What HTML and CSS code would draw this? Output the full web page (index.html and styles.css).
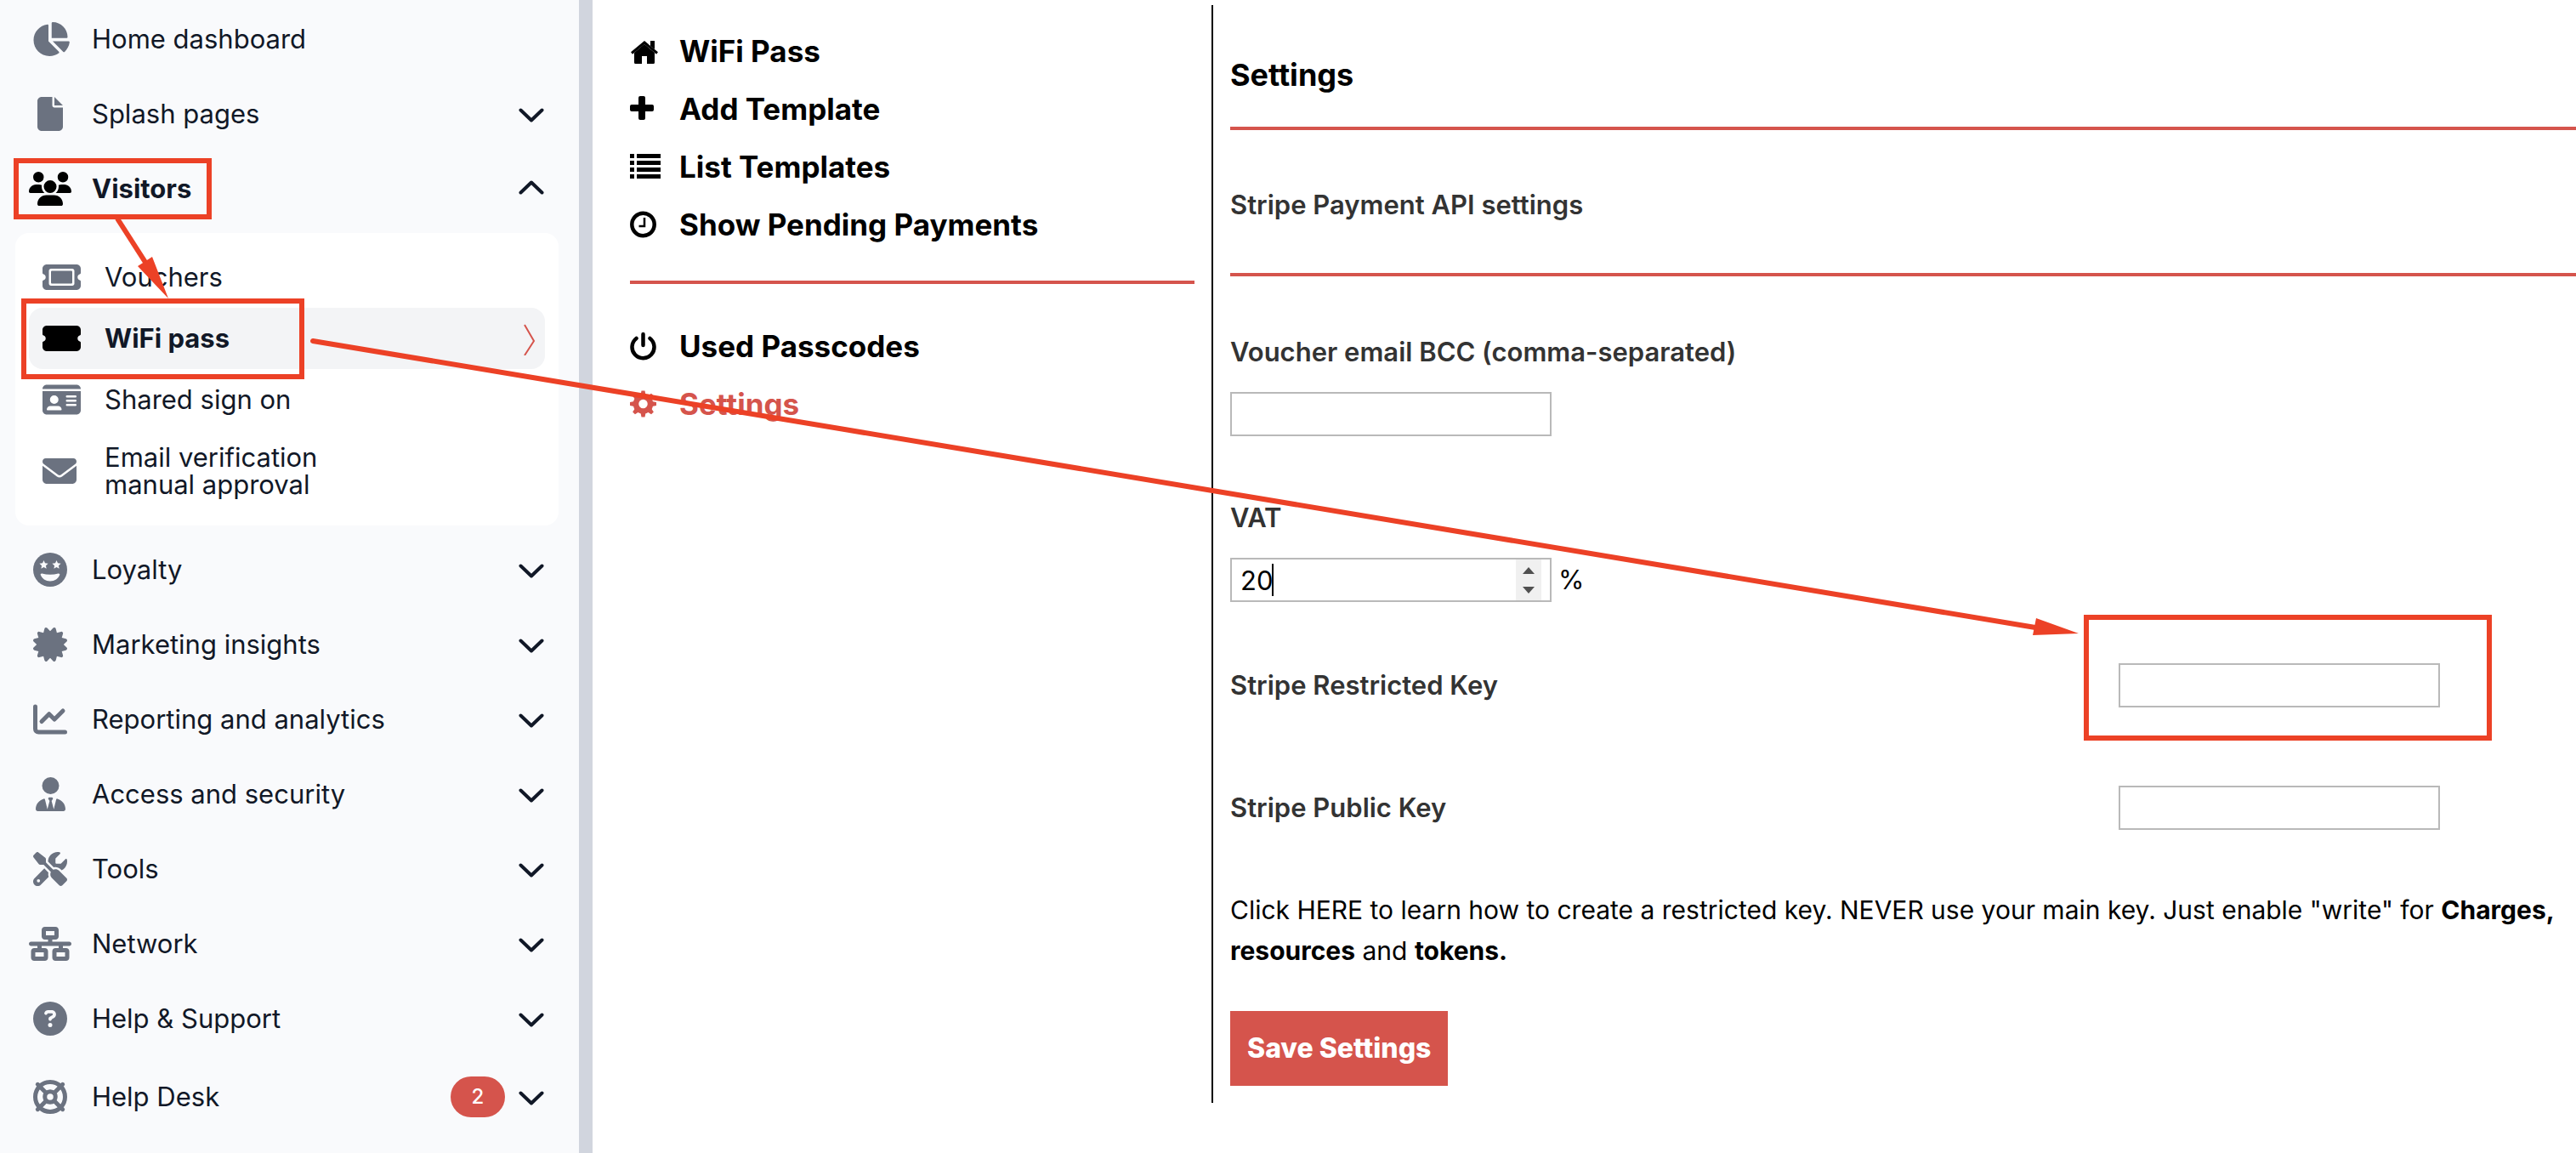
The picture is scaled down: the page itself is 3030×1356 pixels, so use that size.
FILE: index.html
```html
<!DOCTYPE html>
<html lang="en">
<head>
<meta charset="utf-8">
<title>WiFi Pass settings</title>
<link rel="stylesheet" href="styles.css">
</head>
<body>
<svg class="defs" aria-hidden="true">
  <symbol id="chevron" viewBox="0 0 32 20"><path d="M3.500 5.500L16 17.500 28.500 5.500" fill="none" stroke="currentColor" stroke-width="4" stroke-linecap="round" stroke-linejoin="round"/></symbol>
</svg>
<div class="app">
  <nav class="sidebar" aria-label="Main">
    <a class="nav-row" href="#"><span class="nav-icon"><svg width="45" height="40" viewBox="0 0 576 512"><path d="M304 240V16.600c0-9 7-16.600 16-16.600C443.700 0 544 100.300 544 224c0 9-7.600 16-16.600 16H304zM32 272C32 150.700 122.100 50.300 239 34.300c9.200-1.300 17 6.100 17 15.400V288L412.500 444.500c6.700 6.700 6.200 17.700-1.500 23.100C371.800 495.600 323.800 512 272 512C139.500 512 32 404.600 32 272zm526.400 16c9.300 0 16.600 7.800 15.400 17c-7.700 55.900-34.600 105.600-73.900 142.300c-6 5.600-15.400 5.200-21.200-.7L320 288H558.400z"/></svg></span><span class="nav-text">Home dashboard</span></a>
    <a class="nav-row" href="#"><span class="nav-icon"><svg width="30" height="40" viewBox="0 0 384 512"><path d="M0 64C0 28.700 28.700 0 64 0H224V128c0 17.700 14.300 32 32 32H384V448c0 35.300-28.700 64-64 64H64c-35.300 0-64-28.700-64-64V64zm384 64H256V0L384 128z"/></svg></span><span class="nav-text">Splash pages</span><svg class="chevron"><use href="#chevron"/></svg></a>
    <a class="nav-row nav-row--open" href="#"><span class="nav-icon"><svg width="50" height="40" viewBox="0 0 640 512"><path d="M144 0a80 80 0 1 1 0 160A80 80 0 1 1 144 0zM512 0a80 80 0 1 1 0 160A80 80 0 1 1 512 0zM0 298.700C0 239.800 47.800 192 106.700 192h42.700c15.900 0 31 3.500 44.600 9.700c-1.300 7.200-1.900 14.700-1.900 22.300c0 38.200 16.800 72.500 43.300 96c-.2 0-.4 0-.7 0H21.300C9.600 320 0 310.400 0 298.700zM405.300 320c-.2 0-.4 0-.7 0c26.600-23.500 43.300-57.800 43.300-96c0-7.600-.7-15-1.900-22.300c13.600-6.300 28.700-9.700 44.600-9.700h42.700C592.200 192 640 239.800 640 298.700c0 11.800-9.600 21.300-21.300 21.300H405.300zM224 224a96 96 0 1 1 192 0 96 96 0 1 1 -192 0zM128 485.300C128 411.700 187.700 352 261.300 352H378.700C452.300 352 512 411.700 512 485.300c0 14.700-11.900 26.700-26.700 26.700H154.700c-14.700 0-26.700-11.900-26.700-26.700z"/></svg></span><span class="nav-text">Visitors</span><svg class="chevron chevron--up"><use href="#chevron"/></svg></a>
    <div class="sub-panel">
      <a class="sub-row" href="#"><span class="sub-icon"><svg width="45" height="40" viewBox="0 0 576 512"><path fill-rule="evenodd" d="M64 64C28.700 64 0 92.700 0 128v64c0 8.800 7.400 15.700 15.700 18.600C34.500 217.100 48 235 48 256s-13.500 38.900-32.300 45.400C7.400 304.300 0 311.200 0 320v64c0 35.300 28.700 64 64 64H512c35.300 0 64-28.700 64-64V320c0-8.800-7.400-15.700-15.700-18.600C541.500 294.900 528 277 528 256s13.500-38.900 32.300-45.400c8.300-2.900 15.700-9.800 15.700-18.600V128c0-35.300-28.700-64-64-64H64zM96 160c0-17.700 14.300-32 32-32H448c17.700 0 32 14.300 32 32V352c0 17.700-14.300 32-32 32H128c-17.700 0-32-14.300-32-32V160zM128 176v160c0 8.800 7.200 16 16 16H432c8.800 0 16-7.200 16-16V176c0-8.800-7.200-16-16-16H144c-8.800 0-16 7.200-16 16z"/></svg></span><span>Vouchers</span></a>
      <a class="sub-row sub-row--active" href="#"><span class="sub-icon"><svg width="45" height="40" viewBox="0 0 576 512"><path d="M64 64C28.700 64 0 92.700 0 128v64c0 8.800 7.400 15.700 15.700 18.600C34.500 217.100 48 235 48 256s-13.500 38.900-32.300 45.400C7.400 304.300 0 311.200 0 320v64c0 35.300 28.700 64 64 64H512c35.300 0 64-28.700 64-64V320c0-8.800-7.400-15.700-15.700-18.600C541.500 294.900 528 277 528 256s13.500-38.900 32.300-45.400c8.300-2.900 15.700-9.800 15.700-18.600V128c0-35.300-28.700-64-64-64H64z"/></svg></span><span>WiFi pass</span><svg class="arrow" width="16" height="40" viewBox="0 0 16 40"><path d="M2 4L13 23 2 40" fill="none" stroke="currentColor" stroke-width="2"/></svg></a>
      <a class="sub-row" href="#"><span class="sub-icon"><svg width="45" height="40" viewBox="0 0 576 512"><path fill-rule="evenodd" d="M0 96l576 0c0-35.300-28.700-64-64-64H64C28.700 32 0 60.700 0 96zm0 32V416c0 35.300 28.700 64 64 64H512c35.300 0 64-28.700 64-64V128H0zM64 405.300c0-29.500 23.900-53.300 53.300-53.300H234.700c29.500 0 53.300 23.900 53.300 53.300c0 5.900-4.800 10.700-10.700 10.700H74.700c-5.900 0-10.700-4.800-10.700-10.700zM176 192a64 64 0 1 1 0 128 64 64 0 1 1 0-128zM368 192H496a16 16 0 0 1 0 32H368a16 16 0 0 1 0-32zM368 256H496a16 16 0 0 1 0 32H368a16 16 0 0 1 0-32zM368 320H496a16 16 0 0 1 0 32H368a16 16 0 0 1 0-32z"/></svg></span><span>Shared sign on</span></a>
      <a class="sub-row sub-row--tall" href="#"><span class="sub-icon"><svg width="40" height="40" viewBox="0 0 512 512"><path d="M48 64C21.500 64 0 85.500 0 112c0 15.100 7.100 29.300 19.200 38.400L236.800 313.600c11.400 8.500 27 8.500 38.400 0L492.800 150.400c12.100-9.100 19.200-23.300 19.200-38.400c0-26.500-21.500-48-48-48H48zM0 176V384c0 35.300 28.700 64 64 64H448c35.300 0 64-28.700 64-64V176L294.400 339.200c-22.800 17.100-54 17.100-76.800 0L0 176z"/></svg></span><span>Email verification<br>manual approval</span></a>
    </div>
    <a class="nav-row" href="#"><span class="nav-icon"><svg width="40" height="40" viewBox="0 0 512 512"><circle cx="256" cy="256" r="256"/><g fill="#f9fafc"><path id="star" d="M160 116l19 42 46 6-34 31 9 46-40-23-40 23 9-46-34-31 46-6z"/><use href="#star" x="192"/><path d="M112 334c-5-14 8-25 22-21 76 20 168 20 244 0 14-4 27 7 22 21-20 56-77 96-144 96s-124-40-144-96z"/></g></svg></span><span class="nav-text">Loyalty</span><svg class="chevron"><use href="#chevron"/></svg></a>
    <a class="nav-row" href="#"><span class="nav-icon"><svg width="40" height="40" viewBox="0 0 512 512"><path d="M211 7.300C205 1 196-1.400 187.600 .8s-14.900 8.900-17.100 17.300L154.700 80.600l-62-17.500c-8.400-2.400-17.400 0-23.500 6.100s-8.500 15.100-6.100 23.500l17.500 62L18.100 170.600c-8.400 2.100-15 8.700-17.300 17.100S1 205 7.300 211l46.200 45L7.300 301C1 307-1.400 316 .8 324.400s8.900 14.900 17.300 17.100l62.500 15.800-17.500 62c-2.400 8.400 0 17.400 6.100 23.500s15.100 8.500 23.500 6.100l62-17.500 15.800 62.500c2.100 8.400 8.700 15 17.100 17.300s17.300-.2 23.400-6.400l45-46.200 45 46.200c6.100 6.200 15 8.700 23.400 6.400s14.900-8.900 17.100-17.300l15.800-62.500 62 17.500c8.400 2.400 17.400 0 23.500-6.100s8.500-15.100 6.100-23.500l-17.500-62 62.500-15.800c8.400-2.100 15-8.700 17.300-17.100s-.2-17.400-6.400-23.400l-46.200-45 46.200-45c6.200-6.100 8.700-15 6.400-23.400s-8.900-14.900-17.300-17.100l-62.500-15.800 17.500-62c2.400-8.400 0-17.400-6.100-23.500s-15.100-8.500-23.500-6.100l-62 17.500L341.400 18.100c-2.100-8.400-8.700-15-17.100-17.300S307 1 301 7.300L256 53.500 211 7.300z"/></svg></span><span class="nav-text">Marketing insights</span><svg class="chevron"><use href="#chevron"/></svg></a>
    <a class="nav-row" href="#"><span class="nav-icon"><svg width="40" height="40" viewBox="0 0 512 512"><path d="M32 64v336c0 26.500 21.500 48 48 48h400M128 288l112-112 80 80 128-128" fill="none" stroke="currentColor" stroke-width="64" stroke-linecap="round" stroke-linejoin="round"/></svg></span><span class="nav-text">Reporting and analytics</span><svg class="chevron"><use href="#chevron"/></svg></a>
    <a class="nav-row" href="#"><span class="nav-icon"><svg width="35" height="40" viewBox="0 0 448 512"><path d="M96 128a128 128 0 1 0 256 0A128 128 0 1 0 96 128zm94.500 200.200l18.600 31L175.800 483.100l-36-146.900c-2-8.100-9.800-13.400-17.900-11.300C51.900 342.400 0 405.800 0 481.300c0 17 13.800 30.700 30.700 30.700H417.300c17 0 30.700-13.800 30.700-30.700c0-75.500-51.900-138.900-121.900-156.400c-8.100-2-15.900 3.300-17.900 11.300l-36 146.900L238.900 359.200l18.600-31c6.400-10.700-1.300-24.200-13.700-24.200H204.300c-12.400 0-20.100 13.600-13.700 24.200z"/></svg></span><span class="nav-text">Access and security</span><svg class="chevron"><use href="#chevron"/></svg></a>
    <a class="nav-row" href="#"><span class="nav-icon"><svg width="40" height="40" viewBox="0 0 512 512"><path fill-rule="evenodd" d="M78.600 5C69.100-2.400 55.600-1.500 47 7L7 47c-8.500 8.500-9.400 22-2.100 31.600l80 104c4.500 5.900 11.600 9.400 19 9.400h54.100l109 109c-14.700 29-10 65.400 14.300 89.600l112 112c12.500 12.500 32.800 12.500 45.300 0l64-64c12.500-12.500 12.500-32.800 0-45.300l-112-112c-24.200-24.200-60.600-29-89.600-14.300l-109-109V104c0-7.500-3.500-14.500-9.400-19L78.600 5zM19.900 396.100C7.200 408.800 0 426.100 0 444.100C0 481.600 30.400 512 67.900 512c18 0 35.300-7.200 48-19.900L233.700 374.300c-7.800-20.900-9-43.600-3.600-65.100l-61.700-61.700L19.900 396.100zM512 144c0-10.500-1.100-20.700-3.200-30.500c-2.400-11.200-16.100-14.100-24.200-6l-63.900 63.900c-3 3-7.100 4.700-11.300 4.700H352c-8.800 0-16-7.200-16-16V102.600c0-4.200 1.700-8.300 4.700-11.300l63.900-63.900c8.100-8.100 5.200-21.800-6-24.200C388.700 1.100 378.500 0 368 0C288.500 0 224 64.500 224 144l0 .8 85.300 85.300c36-9.100 75.800 .5 104 28.700L429 274.500c49-23 83-72.800 83-130.500zM56 432a24 24 0 1 1 48 0 24 24 0 1 1 -48 0z"/></svg></span><span class="nav-text">Tools</span><svg class="chevron"><use href="#chevron"/></svg></a>
    <a class="nav-row" href="#"><span class="nav-icon"><svg width="50" height="40" viewBox="0 0 640 512"><path fill-rule="evenodd" d="M256 64H384v64H256V64zM240 0c-26.500 0-48 21.500-48 48v96c0 26.500 21.500 48 48 48h48v32H32c-17.700 0-32 14.300-32 32s14.300 32 32 32h96v32H80c-26.500 0-48 21.500-48 48v96c0 26.500 21.500 48 48 48H240c26.500 0 48-21.500 48-48V368c0-26.500-21.500-48-48-48H192V288H448v32H400c-26.500 0-48 21.500-48 48v96c0 26.500 21.500 48 48 48H560c26.500 0 48-21.500 48-48V368c0-26.500-21.500-48-48-48H512V288h96c17.700 0 32-14.300 32-32s-14.300-32-32-32H352V192h48c26.500 0 48-21.500 48-48V48c0-26.500-21.500-48-48-48H240zM96 448V384H224v64H96zm320-64H544v64H416V384z"/></svg></span><span class="nav-text">Network</span><svg class="chevron"><use href="#chevron"/></svg></a>
    <a class="nav-row" href="#"><span class="nav-icon"><svg width="40" height="40" viewBox="0 0 512 512"><path fill-rule="evenodd" d="M256 512A256 256 0 1 0 256 0a256 256 0 1 0 0 512zM169.800 165.300c7.900-22.300 29.100-37.300 52.800-37.300h58.300c34.900 0 63.100 28.300 63.100 63.100c0 22.600-12.100 43.500-31.700 54.800L280 264.400c-.2 13-10.900 23.600-24 23.600c-13.300 0-24-10.700-24-24V250.500c0-8.600 4.600-16.500 12.100-20.800l44.300-25.400c4.700-2.700 7.600-7.700 7.600-13.100c0-8.400-6.800-15.100-15.100-15.100H222.600c-3.400 0-6.400 2.100-7.500 5.300l-.4 1.200c-4.400 12.500-18.200 19-30.600 14.600s-19-18.200-14.600-30.600l.4-1.200zM224 352a32 32 0 1 1 64 0 32 32 0 1 1 -64 0z"/></svg></span><span class="nav-text">Help &amp; Support</span><svg class="chevron"><use href="#chevron"/></svg></a>
    <a class="nav-row" href="#"><span class="nav-icon"><svg width="40" height="40" viewBox="0 0 512 512"><g fill="none" stroke="currentColor" stroke-width="64" stroke-linecap="round"><circle cx="256" cy="256" r="224"/><circle cx="256" cy="256" r="80"/><path d="M68 68l126 126M444 68L318 194M68 444l126-126M444 444L318 318"/></g></svg></span><span class="nav-text">Help Desk</span><span class="badge">2</span><svg class="chevron"><use href="#chevron"/></svg></a>
  </nav>

  <div class="workspace">
    <nav class="menu" aria-label="WiFi Pass">
      <a class="menu-row" href="#"><span class="menu-icon"><svg width="34" height="36" viewBox="0 0 34 36"><path d="M5 20L17 9.500 29 20v11.500a1.500 1.500 0 0 1-1.500 1.500H20v-9h-6v9H6.500A1.500 1.500 0 0 1 5 31.500z"/><path d="M2 18.500L17 6l15 12.500" fill="none" stroke="#fff" stroke-width="6"/><path d="M24 6h5v10l-5-4z"/><path d="M2 20.500L17 8l15 12.500" fill="none" stroke="currentColor" stroke-width="3"/></svg></span>WiFi Pass</a>
      <a class="menu-row" href="#"><span class="menu-icon"><svg width="28" height="36" viewBox="0 0 28 36"><path d="M12 3h4a2 2 0 0 1 2 2v8h8a2 2 0 0 1 2 2v4a2 2 0 0 1-2 2h-8v8a2 2 0 0 1-2 2h-4a2 2 0 0 1-2-2v-8H2a2 2 0 0 1-2-2v-4a2 2 0 0 1 2-2h8V5a2 2 0 0 1 2-2z"/></svg></span>Add Template</a>
      <a class="menu-row" href="#"><span class="menu-icon"><svg width="36" height="36" viewBox="0 0 36 36"><path d="M0 3h5v5H0zM8 3h28v5H8zM0 11h5v5H0zM8 11h28v5H8zM0 19h5v5H0zM8 19h28v5H8zM0 27h5v5H0zM8 27h28v5H8z"/></svg></span>List Templates</a>
      <a class="menu-row" href="#"><span class="menu-icon"><svg width="31" height="36" viewBox="0 0 31 36"><g fill="none" stroke="currentColor"><circle cx="15.500" cy="18" r="13.200" stroke-width="4.500"/><path d="M17 10v10h-6.500" stroke-width="2.500"/></g></svg></span>Show Pending Payments</a>
      <hr class="rule menu-rule">
      <a class="menu-row" href="#"><span class="menu-icon"><svg width="31" height="36" viewBox="0 0 31 36"><g fill="none" stroke="currentColor" stroke-width="4.500" stroke-linecap="round"><path d="M7.500 9a13 13 0 1 0 16 0M15.500 4v13"/></g></svg></span>Used Passcodes</a>
      <a class="menu-row menu-row--active" href="#"><span class="menu-icon"><svg width="31" height="36" viewBox="0 0 31 36"><circle cx="15.500" cy="18" r="8.500" fill="none" stroke="currentColor" stroke-width="6.500"/><g id="teeth"><path id="tooth" d="M12.500 7.500l1-5h4l1 5zM12.500 28.500l1 5h4l1-5z"/><use href="#tooth" transform="rotate(90 15.500 18)"/></g><use href="#teeth" transform="rotate(45 15.500 18)"/></svg></span>Settings</a>
    </nav>

    <main class="content">
      <h1 class="title">Settings</h1>
      <hr class="rule">
      <h2 class="subtitle">Stripe Payment API settings</h2>
      <hr class="rule">
      <form class="form">
        <div class="field">
          <label class="label" for="bcc">Voucher email BCC (comma-separated)</label>
          <input class="input" id="bcc" type="text">
        </div>
        <div class="field">
          <label class="label" for="vat">VAT</label>
          <div class="with-unit">
            <span class="vat-box"><input class="input" id="vat" type="number" value="20"><span class="caret"></span></span>
            <span>%</span>
          </div>
        </div>
        <div class="keys">
          <div class="key-row">
            <label class="label" for="restricted">Stripe Restricted Key</label>
            <input class="input" id="restricted" type="text">
          </div>
          <div class="key-row">
            <label class="label" for="public">Stripe Public Key</label>
            <input class="input" id="public" type="text">
          </div>
        </div>
        <p class="note">Click HERE to learn how to create a restricted key. NEVER use your main key. Just enable "write" for <strong>Charges,<br>resources</strong> and <strong>tokens.</strong></p>
        <button class="save" type="button">Save Settings</button>
      </form>
    </main>
  </div>
</div>

<svg class="markup" width="3030" height="1356" viewBox="0 0 3030 1356" aria-hidden="true">
  <g fill="none" stroke="#ec4126" stroke-width="6">
    <rect x="19" y="189" width="227" height="66"/>
    <rect x="28" y="354" width="327" height="89"/>
    <rect x="2454" y="726" width="474" height="142"/>
    <path d="M138 257L172 310"/>
    <path d="M368 401L2394 738" stroke-linecap="round"/>
  </g>
  <path d="M179 302L162 313 198 351zM2395 727L2391 747 2445 745z" fill="#ec4126"/>
</svg>
</body>
</html>
```
FILE: styles.css
```css
* { box-sizing: border-box; }

body {
  margin: 0;
  background: #fff;
  color: #000;
  font: 400 31px/48px Inter, "Liberation Sans", sans-serif;
  overflow-x: hidden;
}

a { color: inherit; text-decoration: none; }
svg { display: block; fill: currentColor; }
.defs { position: absolute; width: 0; height: 0; }

.app { display: flex; min-height: 100vh; }

/* Main navigation */
.sidebar {
  flex: 0 0 697px;
  padding: 2px 24px 18px 18px;
  background: #f9fafc;
  border-right: 16px solid #d1d5de;
  color: #111827;
}
.nav-row {
  display: flex;
  align-items: center;
  min-height: 88px;
  padding: 24px 16px;
  line-height: 40px;
}
.nav-row--open { font-weight: 700; }
.nav-icon {
  display: flex;
  justify-content: center;
  width: 50px;
  margin-right: 24px;
  color: #6b7280;
}
.nav-row--open .nav-icon { color: #000; }
.nav-text { flex: 1; }
.chevron { width: 32px; height: 20px; }
.chevron--up { transform: rotate(180deg); }
.badge {
  width: 64px;
  margin-right: 15px;
  border-radius: 24px;
  background: #d5544c;
  color: #fff;
  font-size: 24px;
  font-weight: 500;
  line-height: 48px;
  text-align: center;
}

.sub-panel {
  margin: 8px 0;
  padding: 16px;
  border-radius: 16px;
  background: #fff;
}
.sub-row {
  display: flex;
  align-items: center;
  min-height: 72px;
  padding: 0 10px 0 16px;
  border-radius: 16px;
  line-height: 32px;
}
.sub-row--tall { min-height: 96px; }
.sub-row--active { background: #f3f4f6; font-weight: 700; }
.sub-icon { width: 45px; margin-right: 28px; color: #6b7280; }
.sub-row--active .sub-icon { color: #000; }
.arrow { margin-left: auto; color: #d5544c; }

/* WiFi Pass section */
.workspace {
  display: flex;
  flex: 1;
  align-self: flex-start;
  min-width: 0;
  padding-top: 6px;
}
.menu {
  flex: 0 0 730px;
  padding: 20px 20px 0 44px;
  border-right: 2px solid #000;
}
.menu-row {
  display: flex;
  align-items: center;
  height: 68px;
  font-size: 35px;
  font-weight: 700;
}
.menu-row--active { color: #d5544c; }
.menu-icon { width: 36px; margin-right: 22px; }
.rule { height: 4px; margin: 0; border: 0; background: #d5544c; }
.menu-rule { margin: 32px 0 39px; }

.content { flex: 1; min-width: 0; padding: 58px 0 20px 20px; }
.title { margin: 0 0 37px; font-size: 36px; font-weight: 700; line-height: 48px; }
.subtitle, .label { color: #333; font-size: 31px; font-weight: 600; line-height: 48px; }
.subtitle { margin: 64px 0 56px; }

.form { padding-top: 65px; }
.field { margin-bottom: 72px; }
.label { display: block; }
.input {
  display: block;
  width: 378px;
  height: 52px;
  padding: 0 10px;
  border: 2px solid #b9b9b9;
  background: #fff;
  color: #000;
  font: inherit;
}
.field .label { margin-bottom: 23px; }
.with-unit { display: flex; align-items: center; gap: 8px; }
.vat-box { position: relative; }
.caret { position: absolute; left: 49px; top: 7px; width: 2px; height: 38px; background: #000; }
.input::-webkit-inner-spin-button {
  appearance: none;
  width: 30px;
  height: 48px;
  opacity: 1;
  background: #f0f0f0 url("data:image/svg+xml,%3Csvg xmlns='http://www.w3.org/2000/svg' width='30' height='48'%3E%3Cpath d='M8 17l7-8 7 8zM8 32l7 8 7-8z' fill='%23505050'/%3E%3C/svg%3E") center no-repeat;
}
.keys { display: grid; gap: 92px; }
.key-row {
  display: grid;
  grid-template-columns: 66fr 34fr;
  align-items: center;
}
.note { margin: 70px 0 47px; font-size: 30px; white-space: nowrap; }
.note strong { font-weight: 700; }
.save {
  height: 88px;
  padding: 0 20px;
  border: 0;
  background: #d5544c;
  color: #fff;
  font: 800 32px/48px Inter, "Liberation Sans", sans-serif;
}

/* Callout boxes and arrows drawn over the page */
.markup { position: absolute; left: 0; top: 0; pointer-events: none; }
```
